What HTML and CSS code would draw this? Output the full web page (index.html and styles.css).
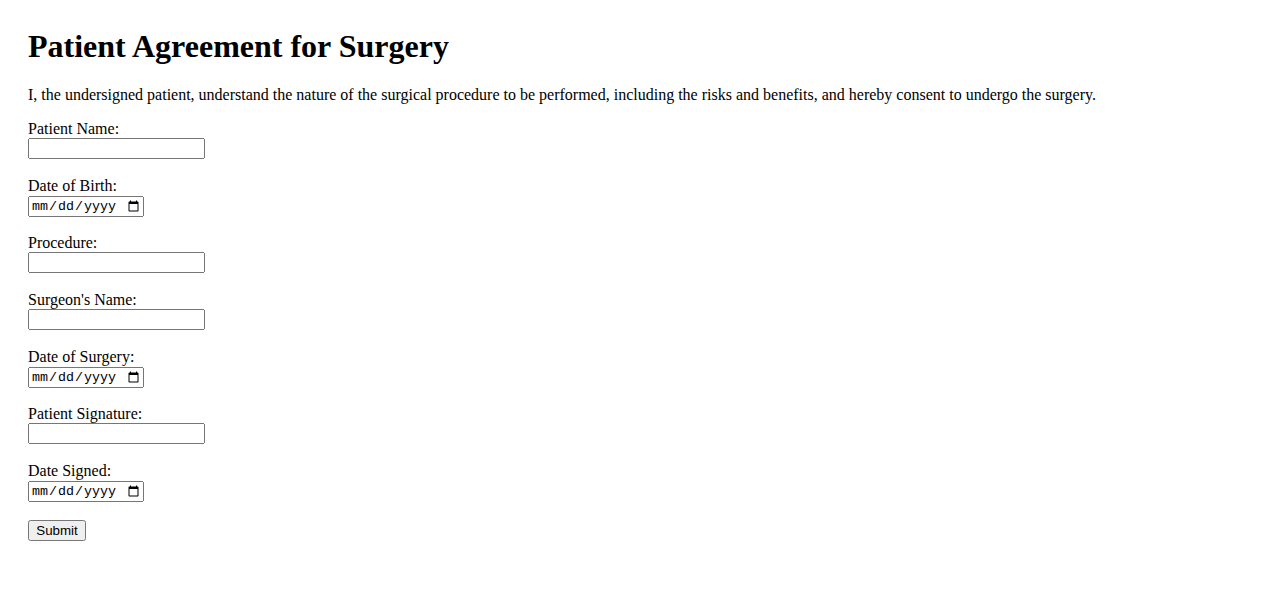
FILE: index.html
```html
<!DOCTYPE html>
<html lang="en">
<head>
<meta charset="UTF-8">
<meta name="viewport" content="width=device-width, initial-scale=1.0">
<title>Patient Agreement for Surgery</title>
<link rel="stylesheet" href="styles.css">
</head>
<body>

<div class="page">
  <h1 class="title">Patient Agreement for Surgery</h1>
  <p class="intro">I, the undersigned patient, understand the nature of the surgical procedure to be performed, including the risks and benefits, and hereby consent to undergo the surgery.</p>

  <form class="consent-form">
    <div class="field">
      <label for="patientName">Patient Name:</label>
      <input type="text" id="patientName" name="patientName">
    </div>

    <div class="field">
      <label for="dob">Date of Birth:</label>
      <input type="date" id="dob" name="dob">
    </div>

    <div class="field">
      <label for="procedure">Procedure:</label>
      <input type="text" id="procedure" name="procedure">
    </div>

    <div class="field">
      <label for="surgeon">Surgeon's Name:</label>
      <input type="text" id="surgeon" name="surgeon">
    </div>

    <div class="field">
      <label for="surgeryDate">Date of Surgery:</label>
      <input type="date" id="surgeryDate" name="surgeryDate">
    </div>

    <div class="field">
      <label for="signature">Patient Signature:</label>
      <input type="text" id="signature" name="signature">
    </div>

    <div class="field">
      <label for="dateSigned">Date Signed:</label>
      <input type="date" id="dateSigned" name="dateSigned">
    </div>

    <button type="submit" class="submit">Submit</button>
  </form>
</div>

</body>
</html>
```

FILE: styles.css
```css
body {
  margin: 0;
  font-family: "Liberation Serif", "Times New Roman", serif;
  font-size: 16px;
  color: #000;
  background: #fff;
}

.page {
  padding: 28px;
}

.title {
  font-size: 32px;
  margin: 0 0 21px 0;
}

.intro {
  margin: 0 0 16px 0;
}

.field {
  margin-bottom: 17.7px;
}

.field label {
  display: block;
}

.field input {
  font-family: "Liberation Sans", Arial, sans-serif;
  font-size: 13.33px;
  box-sizing: border-box;
  height: 21px;
}

.field input[type="text"] {
  width: 177px;
}

.field input[type="date"] {
  font-family: "Liberation Mono", "Courier New", monospace;
  width: 116px;
  margin-top: 1px;
}

.submit {
  font-family: "Liberation Sans", Arial, sans-serif;
  font-size: 13.33px;
  width: 58px;
  height: 21px;
}
```
